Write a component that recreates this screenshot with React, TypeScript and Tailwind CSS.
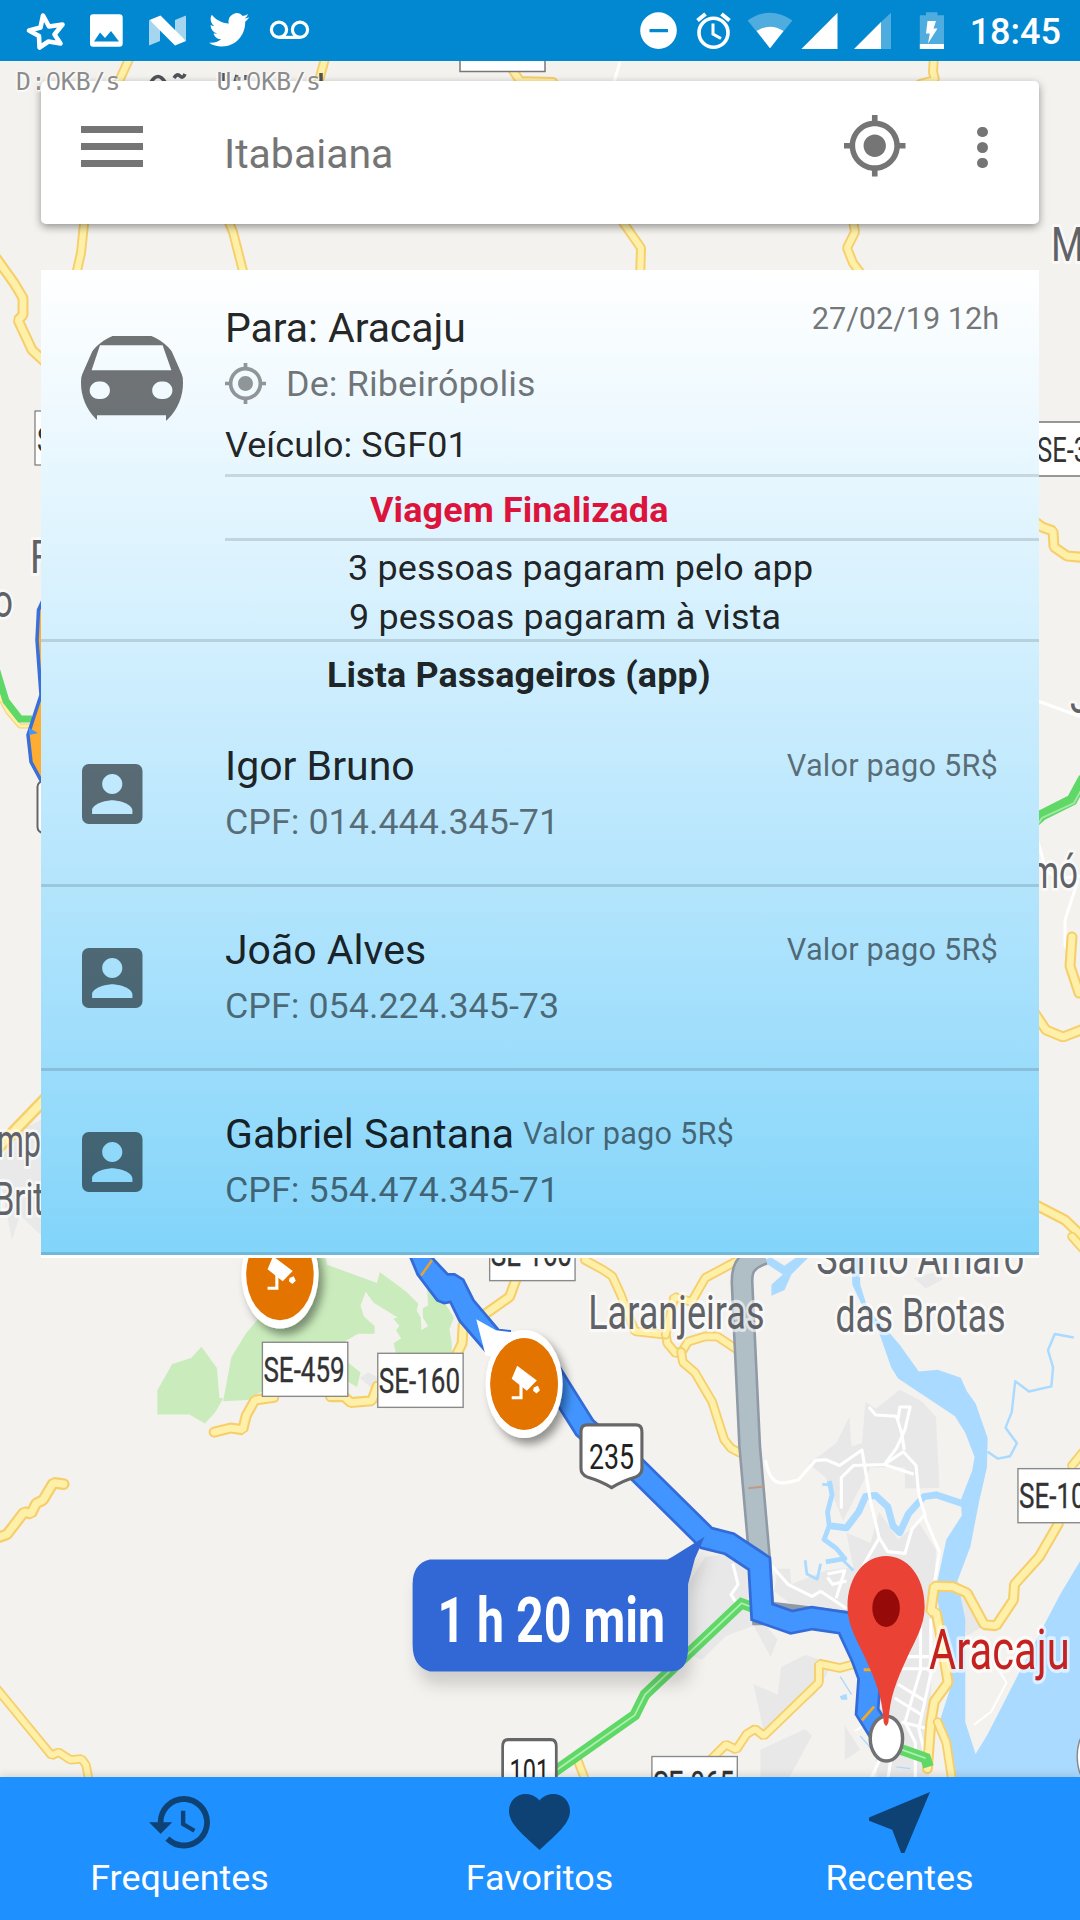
import React from "react";

const ROBOTO = "Roboto, sans-serif";

/* ---------- icons ---------- */

function TargetIcon({ className }: { className: string }) {
  return (
    <svg viewBox="1 1 22 22" className={className} fill="currentColor">
      <path d="M12 8c-2.21 0-4 1.79-4 4s1.79 4 4 4 4-1.79 4-4-1.79-4-4-4zm8.94 3A8.994 8.994 0 0013 3.06V1h-2v2.06A8.994 8.994 0 003.06 11H1v2h2.06A8.994 8.994 0 0011 20.94V23h2v-2.06A8.994 8.994 0 0020.94 13H23v-2h-2.06zM12 19c-3.87 0-7-3.13-7-7s3.13-7 7-7 7 3.13 7 7-3.13 7-7 7z" />
    </svg>
  );
}

function PersonIcon() {
  return (
    <svg viewBox="3 3 18 18" className="h-[60px] w-[60.5px]" fill="currentColor" preserveAspectRatio="none">
      <path d="M3 5v14a2 2 0 002 2h14a2 2 0 002-2V5a2 2 0 00-2-2H5a2 2 0 00-2 2zm12 4c0 1.66-1.34 3-3 3s-3-1.34-3-3 1.34-3 3-3 3 1.34 3 3zm-9 8c0-2 4-3.1 6-3.1s6 1.1 6 3.1v1H6v-1z" />
    </svg>
  );
}

function CarIcon() {
  return (
    <svg viewBox="0 0 102 102" className="h-[102px] w-[102px]">
      <defs>
        <clipPath id="avatar">
          <circle cx="51" cy="51" r="51" />
        </clipPath>
      </defs>
      <path
        clipPath="url(#avatar)"
        fillRule="evenodd"
        fill="currentColor"
        d="M18 4H84L102 45V90H85V83.3H16V90H0V45ZM19 13.3L10.6 38.3H90.4L81.6 13.3ZM18.8 49.6a8.8 8.8 0 100 17.4a8.8 8.8 0 100-17.4ZM81.3 49.6a8.8 8.8 0 100 17.4a8.8 8.8 0 100-17.4Z"
      />
    </svg>
  );
}

/* ---------- status bar ---------- */

function StatusBar() {
  return (
    <header className="relative h-[61px] w-full bg-[#0288d1]">
      <svg viewBox="0 0 1080 61" className="h-[61px] w-[1080px]" fill="#fff">
        <path
          d="M43 15.500L49 26.500L62.500 24.500L54.500 34.500L60.500 43.500L48.500 41.500L39.500 47.500L39 36L29 30.500L40.500 27.500Z"
          fill="none"
          stroke="#fff"
          strokeWidth="4.600"
          strokeLinejoin="round"
        />
        <path fillRule="evenodd" d="M93 14.300H119.500Q122.700 14.300 122.700 17.500V43.500Q122.700 46.700 119.500 46.700H93Q90 46.700 90 43.500V17.500Q90 14.300 93 14.300ZM94 41.500H119L111 31L105 38L100 32.500Z" />
        <path d="M149 20L160 28V41L149 45.500ZM175 20L186 15.500V41L175 33Z" opacity=".65" />
        <path d="M149.500 20L160.500 15.500L186 41L175 45.500Z" />
        <g transform="translate(209 9.500) scale(1.68 1.7)">
          <path d="M23.950 4.570a10 10 0 01-2.820.770 4.960 4.960 0 002.160-2.720c-.950.550-2 .950-3.120 1.180a4.920 4.920 0 00-8.380 4.480C7.690 8.090 4.070 6.130 1.640 3.160a4.820 4.820 0 00-.670 2.480c0 1.710.870 3.210 2.190 4.100a4.900 4.900 0 01-2.230-.620v.060a4.920 4.920 0 003.950 4.830 5 5 0 01-2.210.080 4.940 4.940 0 004.600 3.420A9.870 9.870 0 010 19.540a13.990 13.990 0 007.550 2.210c9.050 0 14-7.500 14-13.980 0-.210 0-.420-.020-.630a9.940 9.940 0 002.460-2.550z" />
        </g>
        <g fill="none" stroke="#fff" strokeWidth="3.200">
          <circle cx="279" cy="29.800" r="7.600" />
          <circle cx="300" cy="29.800" r="7.600" />
          <path d="M279 37.400H300" />
        </g>
        <path fillRule="evenodd" d="M658.500 12.300a18.300 18.300 0 100 36.600a18.300 18.300 0 100-36.600ZM649.500 29H668V32.200H649.500Z" />
        <g fill="none" stroke="#fff">
          <circle cx="713.500" cy="32.700" r="14.500" strokeWidth="3.600" />
          <path d="M713 23.500V34L721 38.500" strokeWidth="3" />
          <path d="M697.500 20.500L705.500 14M729.500 20.500L721.500 14" strokeWidth="4" />
        </g>
        <path d="M770 48.300L747.600 20.500Q770 5 792.400 20.500Z" opacity=".3" />
        <path d="M770 48.300L756.600 31Q770 22.500 783.500 31Z" />
        <path d="M801.400 49L837.500 12.700V49Z" />
        <path d="M881 22L891 12.700V49H881Z" opacity=".3" />
        <path d="M854 49L881 22V49Z" />
        <path d="M919.800 15.300H926V12.300H937.400V15.300H944V44H919.800Z" opacity=".3" />
        <path d="M919.800 44H944V49H919.800ZM927.500 21H936L933.500 28.500H937.500L928 43.500L929.800 33.500H926Z" />
      </svg>
      <span className="absolute top-0 right-[19px] text-[36px] leading-[65px] font-medium text-white">18:45</span>
    </header>
  );
}

/* ---------- map ---------- */

function Road({ d, w = 28 }: { d: string; w?: number }) {
  return (
    <g fill="none" strokeLinecap="round" strokeLinejoin="bevel">
      <path d={d} stroke="#f6cf6b" strokeWidth={w} />
      <path d={d} stroke="#fff0a9" strokeWidth={w * 0.62} />
    </g>
  );
}

function Plate({ x, y, label, h = 157 }: { x: number; y: number; label: string; h?: number }) {
  return (
    <g>
      <rect x={x} y={y} width="248" height={h} fill="#fff" stroke="#8a8a8a" strokeWidth="4" />
      <text x={x + 3} y={y + 115} fontSize="103" textLength="236" lengthAdjust="spacingAndGlyphs" fill="#333" stroke="#333" strokeWidth="1">
        {label}
      </text>
    </g>
  );
}

function Shield({ x, y, label, scaleX = 1 }: { x: number; y: number; label: string; scaleX?: number }) {
  return (
    <g transform={`translate(${x} ${y}) scale(${scaleX} 1)`}>
      <path d="M22 4H163Q181 4 181 24V130Q181 148 163 155Q120 168 93 186Q65 168 22 155Q4 148 4 130V24Q4 4 22 4Z" fill="#fff" stroke="#666" strokeWidth="9" />
      <text x="27" y="133" fontSize="104" textLength="131" lengthAdjust="spacingAndGlyphs" fill="#222">
        {label}
      </text>
    </g>
  );
}

function CameraPin({ x, y }: { x: number; y: number }) {
  return (
    <g transform={`translate(${x} ${y})`}>
      <ellipse rx="112" ry="157" fill="#fff" filter="url(#pinShadow)" />
      <ellipse rx="98" ry="133" fill="#e37400" />
      <path d="M-20 -53L37 -10L8 20L-36 -15ZM28 10L40 5L46 18L36 28L26 20Z" fill="#fff" />
      <path d="M-36 40H-9V0" fill="none" stroke="#fff" strokeWidth="9" />
    </g>
  );
}

function Place({ x, y, w, size = 140, color = "#5f6368", children }: { x: number; y: number; w: number; size?: number; color?: string; children: string }) {
  return (
    <text
      x={x}
      y={y}
      fontSize={size}
      textLength={w}
      lengthAdjust="spacingAndGlyphs"
      fill={color}
      stroke="#fff"
      strokeOpacity=".6"
      strokeWidth={size * 0.13}
      strokeLinejoin="round"
      paintOrder="stroke"
    >
      {children}
    </text>
  );
}

function MapCanvas() {
  return (
    <svg viewBox="0 0 1080 1920" className="absolute inset-0 h-[1920px] w-[1080px]" style={{ fontFamily: ROBOTO }}>
      <defs>
        <filter id="pinShadow" x="-30%" y="-30%" width="170%" height="170%">
          <feDropShadow dx="14" dy="18" stdDeviation="12" floodOpacity=".4" />
        </filter>
        <filter id="bubbleShadow" x="-20%" y="-20%" width="140%" height="160%">
          <feDropShadow dx="12" dy="40" stdDeviation="22" floodOpacity=".15" />
        </filter>
      </defs>
      <rect width="1080" height="1920" fill="#f3f2ee" />

      {/* upper and side margins */}
      <path d="M622 55L614 82" stroke="#fff" strokeWidth="3" />
      <Road w={10} d="M131 55L119 81L84 224L81 253L76 275" />
      <Road w={10} d="M326 55L318 84" />
      <Road w={10} d="M228 220L233 232L244 275" />
      <Road w={10} d="M510 66L520 81L553 82" />
      <Road w={10} d="M934 55L933 72L935 80L920 84" />
      <Road w={10} d="M620 218L641 248L640 280" />
      <Road w={10} d="M852 215L855 232L847 248L853 263L862 275" />
      <Road w={11} d="M-6 255L14 283L23 298L23 315L18 320L32 350L45 362" />
      <rect x="460" y="40" width="85" height="31.500" fill="#fff" stroke="#777" strokeWidth="1.500" />
      <g fill="none" stroke="#4f5357" strokeWidth="3.500">
        <path d="M151 82Q158 71 165 82M174 78Q177 73 180 76T185 74" />
        <path d="M223 73V82M237 75L235 82M246 75V80M321 73V82" />
      </g>
      <Place x={1051} y={260.700} w={33} size={48}>M</Place>
      <rect x="35" y="411" width="85" height="54" fill="#fff" stroke="#777" strokeWidth="1.200" />
      <text x="37" y="452" fontSize="35.500" textLength="81" lengthAdjust="spacingAndGlyphs" fill="#333">SE-106</text>
      <Place x={30} y={573} w={21} size={47}>F</Place>
      <Place x={-7} y={617} w={20} size={47}>o</Place>
      <Road w={5} d="M-4 690L8 712L20 726L32 726" />
      <path d="M-4 668L6 701L20 719L32 719" fill="none" stroke="#5fd868" strokeWidth="7" />
      <path d="M44 598L38.500 610L37 640L41 695L28 735L31 762L44 786Z" fill="#ffac33" stroke="#3a6fd8" strokeWidth="3.500" />
      <path d="M29 728L38 733L29 735Z" fill="#4295fe" />
      <rect x="37.500" y="781" width="40" height="52" rx="6" fill="#fff" stroke="#666" strokeWidth="2" />
      <path d="M0 1160L20 1130L41 1120V1235L20 1215L12 1240L0 1180Z" fill="#e9e9e9" />
      <Road w={13} d="M-6 1152L48 1096" />
      <Place x={-3} y={1156.500} w={44} size={47}>mp</Place>
      <Place x={-6} y={1214.600} w={50} size={47}>Brit</Place>
      <rect x="1000" y="422" width="100" height="54" fill="#fff" stroke="#777" strokeWidth="1.500" />
      <text x="1037" y="462" fontSize="35.500" textLength="80" lengthAdjust="spacingAndGlyphs" fill="#333">SE-339</text>
      <Road w={11} d="M1030 518L1042 527L1053 531L1054 547L1067 556L1090 558" />
      <path d="M1035 700L1090 720M1036 835L1046 870L1058 879L1080 876M1078 880L1065 920V945L1074 965" fill="none" stroke="#fff" strokeWidth="3" />
      <Place x={1070} y={713} w={20} size={47}>J</Place>
      <path d="M1034 822L1042 815L1072 800L1084 778" fill="none" stroke="#5fd868" strokeWidth="11" />
      <path d="M1034 830L1042 818L1074 803L1084 785" fill="none" stroke="#a5e9a7" strokeWidth="1.800" />
      <Place x={1030} y={888} w={48} size={46}>mó</Place>
      <Road w={11} d="M1072 937L1070 966L1079 993" />
      <Road w={11} d="M1034 1012L1046 1030L1063 1037L1086 1028" />
      <Road w={11} d="M1034 1204L1065 1220L1090 1244" />

      {/* south-west quadrant */}
      <g transform="translate(0 1240) scale(.34435)">
        <path
          fill="#caecbc"
          d="M457 436L500 360L555 343L585 310L630 372L637 458L648 460L640 475L625 500L595 533L550 507L457 507ZM648 468L672 340L715 270L745 235L900 30L945 50L950 72L1095 125L1103 93L1180 150L1215 185L1210 205L1222 225L1224 262L1243 250L1228 225L1228 198L1243 190L1240 130L1290 180L1318 225L1305 260L1312 300L1312 328L1150 328L1143 300L1165 285L1150 262L1160 250L1142 228L1155 225L1085 182L1062 150L1047 190L1057 222L1088 250L1088 272L1040 272L1003 293L1010 355L1047 385L1037 427L1008 410V440L760 440L720 465Z"
        />
        <path d="M1045 400L1070 385L1100 400V430L1080 432Z" fill="#e8e8e8" />
        <Road w={32} d="M622 558L670 546L705 551L715 510L740 465L795 457" />
        <Road w={32} d="M960 455L1000 455L1018 472L1080 467L1095 425" />
        <Road w={32} d="M1325 335L1342 300L1345 245L1395 225L1480 165L1500 110" />
        <Road w={34} d="M-30 872L20 855L70 790L90 795L105 765L125 755L155 705L185 709" />
        <Road w={27} d="M-20 1290L150 1497L170 1487L205 1510L237 1507L250 1525L262 1590" />
        <path
          d="M1170 0L1193 52L1213 100L1270 175L1290 183L1308 180L1335 235L1410 322L1480 330V265L1448 262L1375 175L1345 115L1320 100L1300 100L1255 52L1230 0Z"
          fill="#4295fe"
          stroke="#336bd9"
          strokeWidth="8"
        />
        <path d="M1223 103L1255 58" stroke="#f0a030" strokeWidth="7" />
        <Plate x={762} y={297} label="SE-459" />
        <Plate x={1097} y={329} label="SE-160" />
        <Plate x={1422} y={-39} label="SE-160" />
      </g>

      {/* south-east quadrant */}
      <g transform="translate(540 1240) scale(.34435)">
        <g fill="#e8e8e8">
          <path d="M780 650L860 590L898 515L905 600L935 590L945 470L975 490L1045 435L1110 470L1150 515L1160 720L1060 722L1060 660L960 660L880 815L845 730L830 690Z" />
          <path d="M890 850L960 880L985 790L1040 870L1100 820L1150 900L1140 1100L1130 1568L980 1568L960 1200L890 1080L760 1080L680 1020L690 955L725 955L730 1000L830 960L910 950Z" />
          <path d="M430 1000L480 920L560 910L610 960L615 1090L640 1100L690 1160L670 1210L620 1120L540 1150L470 1220L430 1200Z" />
          <path d="M620 1290L690 1320L700 1240L770 1205L850 1230L800 1320L650 1430Z" />
          <path d="M640 1480L770 1420L790 1440L720 1568L640 1568ZM885 1410L930 1480L885 1510Z" />
          <path d="M1210 1030L1250 1050L1290 1120L1240 1150ZM1085 110L1160 90L1170 115L1120 140Z" />
        </g>
        <g fill="#aadaff">
          <path d="M905 40L907 130L940 200L985 270L1020 370L1040 402L1120 455L1205 512L1235 560L1262 630L1255 670L1222 755L1225 800L1180 870L1165 940L1150 1010L1170 1150L1195 1290L1160 1400L1210 1600H1600V880L1510 1030L1400 1240L1300 1435L1265 1493L1235 1400L1235 1100L1212 990L1250 890L1275 760L1298 660L1300 575L1265 475L1240 440L1222 400L1155 377L1100 382L1045 305L990 240L955 210L930 130L928 40Z" />
          <path d="M645 60L705 100L672 130V162L710 145L730 100L780 50H745L710 75L670 50ZM870 1325L890 1318L893 1335H875Z" />
        </g>
        <g fill="none" stroke="#aadaff" strokeLinejoin="round">
          <path d="M1235 768L1150 740L1115 745L1070 795L1045 850L1025 830L1010 775L975 742L945 745L925 790L890 836L845 830" strokeWidth="20" />
          <path d="M840 700L848 740L835 790L840 830L825 870L860 895L885 925L830 935" strokeWidth="14" />
          <path d="M770 930L775 970L805 985L815 940M820 710L850 712M880 930L910 960" strokeWidth="8" />
          <path d="M1550 283L1495 273L1475 320L1490 370L1485 425L1420 440L1380 410L1370 500L1352 545L1385 590L1365 628L1330 635L1300 615" strokeWidth="7" />
          <path d="M872 1268L905 1320M930 1440L960 1475M1035 1530L1075 1535" strokeWidth="4" />
        </g>
        <g fill="none" stroke="#fff" strokeWidth="9" strokeLinejoin="round">
          <path d="M655 640C670 720 700 710 750 697L800 640L830 638L870 655L935 610L960 760L985 865L1010 905L1060 910L1080 840L1115 800L1160 905L1145 1000" />
          <path d="M875 780V690L910 655L1000 652L1055 615L1092 655L1100 740L1120 805" />
          <path d="M955 485L975 508L1035 512L1050 560L1058 610M1040 520L1045 485L1075 485L1060 550L1035 605L1000 652L1085 680" />
          <path d="M985 865L930 960M672 945L720 1000L790 1035L815 1020L890 1070M560 940L575 1000L555 1030L580 1070" />
          <path d="M835 970L885 960L860 1040M835 980L850 1000L890 990" />
          <path d="M1040 1210H1130M1040 1245H1130M1105 1100V1250L1060 1400L1090 1460V1568M1135 1100V1260L1100 1420L1120 1500M1040 1290L1120 1340M1030 1330L1110 1380M1050 1400L1130 1420M990 1500L960 1568M1020 1500L1010 1568" />
          <path d="M915 1425L960 1400M1260 1408L1310 1370L1355 1285L1320 1230" strokeWidth="6" />
        </g>

        <Road d="M130 58L180 85L210 105L235 160L275 265L365 275L370 300L395 330L415 320L430 295L480 280L515 280L575 320" />
        <Road d="M365 275L390 165L440 180L480 110L570 62" />
        <Road d="M410 325L415 355L450 385L500 470L535 580L555 605L600 628" />
        <Road d="M485 1520L540 1465L570 1480L600 1435L625 1420L650 1440L810 1285L810 1230L870 1243L935 1225" />
        <Road w={32} d="M1125 1535L1135 1400L1145 1340L1185 1285L1160 1130L1150 1080L1135 1080L1145 1005L1200 1007L1240 1025L1290 1117L1325 1120L1375 1045L1378 1000L1450 920L1505 825" />
        <Road d="M1155 1400L1180 1460L1200 1590" />
        <Road d="M1545 655L1590 600M1545 -10L1590 40" />
        <Road d="M105 1500L140 1590" />

        <g fill="none">
          <path d="M40 1545L275 1380L305 1320L585 1055L640 1075M1050 1480L1120 1505L1128 1530" stroke="#5fd868" strokeWidth="31" />
          <path d="M40 1545L275 1380L305 1320L585 1055L640 1075M1050 1480L1120 1505" stroke="#b0efb0" strokeWidth="5" />
          <path d="M650 40C590 60 585 90 587 130L609 600L637 920L648 1085L680 1085L890 1110" stroke="#8f9aa6" strokeWidth="67" />
          <path d="M650 40C590 60 585 90 587 130L609 600L637 920L648 1085" stroke="#b0bec5" strokeWidth="52" />
          <path d="M605 721L650 716" stroke="#c09a85" strokeWidth="6" />
          <path d="M20 370L130 545L170 580L270 655L483 865L550 882L637 940L645 1080L730 1110L790 1098L890 1113L935 1210L957 1270L950 1370L1000 1450" stroke="#336bd9" strokeWidth="71" />
          <path d="M20 370L130 545L170 580L270 655L483 865L550 882L637 940L645 1080L730 1110L790 1098L890 1113L935 1210L957 1270L950 1370L1000 1450" stroke="#4295fe" strokeWidth="55" />
          <path d="M935 1395L970 1355M940 1248H962" stroke="#f5a623" strokeWidth="8" />
        </g>

        <Shield x={115} y={533} label="235" />
        <Shield x={-112} y={1447} label="101" scaleX={0.88} />
        <Plate x={325} y={1500} label="SE-065" />
        <Plate x={1388} y={664} label="SE-100" />
        <ellipse cx="1640" cy="1500" rx="80" ry="110" fill="#fff" stroke="#888" strokeWidth="4" />

        <Place x={140} y={258} w={512}>Laranjeiras</Place>
        <Place x={802} y={100} w={604}>Santo Amaro</Place>
        <Place x={858} y={268} w={494}>das Brotas</Place>
        <Place x={1130} y={1245} w={408} size={162} color="#c5221f">Aracaju</Place>

        <g filter="url(#bubbleShadow)">
          <path d="M-320 928H370L385 920L478 862L450 925L430 1000V1185Q430 1253 380 1253H-320Q-370 1240 -370 1175V1000Q-370 940 -320 928Z" fill="#3367d6" />
        </g>
        <text x="-298" y="1166" fontSize="184" fontWeight="700" textLength="661" lengthAdjust="spacingAndGlyphs" fill="#fff">
          1 h 20 min
        </text>

        <ellipse cx="1006" cy="1448" rx="47" ry="65" fill="#fff" stroke="#707173" strokeWidth="10" />
        <path
          d="M1005 918C945 918 893 975 893 1065C893 1120 922 1165 945 1215C975 1280 995 1330 998 1400Q1005 1422 1012 1400C1015 1330 1035 1280 1065 1215C1088 1165 1117 1120 1117 1065C1117 975 1065 918 1005 918Z"
          fill="#ea4335"
        />
        <ellipse cx="1005" cy="1069" rx="40" ry="55" fill="#960a0a" />
      </g>

      <g transform="translate(0 1240) scale(.34435)">
        <CameraPin x={813} y={100} />
        <CameraPin x={1522} y={418} />
        <path d="M1383 230L1410 335L1440 340L1490 268L1440 262Z" fill="#fff" />
        <ellipse cx="1522" cy="418" rx="98" ry="133" fill="#e37400" />
        <path d="M1502 365L1559 408L1530 438L1486 403ZM1550 428L1562 423L1568 436L1558 446L1548 438Z" fill="#fff" />
        <path d="M1486 458H1513V418" fill="none" stroke="#fff" strokeWidth="9" />
      </g>
    </svg>
  );
}

/* ---------- cards ---------- */

function RateText({ letter }: { letter: string }) {
  return (
    <span>
      {letter}:<span className="font-[Open_Sans] text-[26px]">0</span>KB/s
    </span>
  );
}

function SearchBar() {
  return (
    <div className="mx-[41px] mt-5 flex h-[143px] items-start rounded-[5px] bg-white text-[#757575] shadow-[0_3px_8px_rgba(0,0,0,0.4)]">
      <div className="mt-[45px] ml-10 flex w-[61.500px] flex-col gap-[10px]">
        <div className="h-[7px] bg-current" />
        <div className="h-[7px] bg-current" />
        <div className="h-[7px] bg-current" />
      </div>
      <span className="mt-[49px] ml-[81.500px] text-[41px] leading-[49px]">Itabaiana</span>
      <TargetIcon className="mt-[34px] ml-auto h-[61.500px] w-[61.500px]" />
      <div className="mt-[46px] mr-[51.500px] ml-[71.500px] flex flex-col gap-[5px]">
        <div className="h-[10.400px] w-[10.400px] rounded-full bg-current" />
        <div className="h-[10.400px] w-[10.400px] rounded-full bg-current" />
        <div className="h-[10.400px] w-[10.400px] rounded-full bg-current" />
      </div>
    </div>
  );
}

type Passenger = { name: string; cpf: string; inline?: boolean };

const passengers: Passenger[] = [
  { name: "Igor Bruno", cpf: "014.444.345-71" },
  { name: "João Alves", cpf: "054.224.345-73" },
  { name: "Gabriel Santana", cpf: "554.474.345-71", inline: true },
];

function PassengerRow({ name, cpf, inline }: Passenger) {
  return (
    <div className="flex h-[184px] border-b-[3px] border-black/[0.13] pr-[41px] pl-[41px]">
      <div className="mt-[61px] w-[143px] shrink-0 text-black/[0.54]">
        <PersonIcon />
      </div>
      <div className="mt-[39px] flex-1">
        <div className={inline ? "flex gap-[9px]" : "flex justify-between"}>
          <span className="text-[41px] leading-[49px] text-black/[0.87]">{name}</span>
          <span className="text-[30.750px] leading-[47px] tracking-[0.180px] text-black/[0.54]">Valor pago 5R$</span>
        </div>
        <div className="mt-[5px] text-[35.900px] leading-[53px] text-black/[0.54]">CPF: {cpf}</div>
      </div>
    </div>
  );
}

function TripCard() {
  return (
    <section className="mx-[41px] mt-[46px] h-[988px] border-b-[3px] border-white bg-linear-to-b from-white to-[#81d4fa] bg-clip-padding text-[35.900px] text-black/[0.87]">
      <div className="flex h-[372px] border-b-[3px] border-black/[0.13]">
        <div className="w-[184px] shrink-0 pt-[62px] pl-10 text-black/[0.54]">
          <CarIcon />
        </div>
        <div className="flex flex-1 flex-col">
          <div className="h-[207px] border-b-[3px] border-black/[0.13] pt-[33px]">
            <div className="flex justify-between pr-10">
              <span className="text-[41px] leading-[50px] tracking-[-0.080px]">Para: Aracaju</span>
              <span className="text-[30.750px] leading-[31px] tracking-[-0.080px] text-black/[0.54]">27/02/19 12h</span>
            </div>
            <div className="flex h-[63px] items-center text-black/[0.54]">
              <TargetIcon className="-mt-[3px] mr-[20px] h-[41px] w-[41px] opacity-75" />
              <span className="tracking-[0.120px]">De: Ribeirópolis</span>
            </div>
            <div className="leading-[58px] tracking-[0.100px]">Veículo: SGF01</div>
          </div>
          <div className="h-[64px] border-b-[3px] border-black/[0.13] pt-[5px] pl-[145px] leading-[57px] font-bold tracking-[0.120px] text-[#dc143c]">
            Viagem Finalizada
          </div>
          <div className="pt-[3px] pl-[123px] leading-[49px] tracking-[0.180px]">
            <div>3 pessoas pagaram pelo app</div>
            <div className="pl-[1px]">9 pessoas pagaram à vista</div>
          </div>
        </div>
      </div>
      <div className="h-[61px] pt-[5px] pl-[286px] leading-[57px] font-bold tracking-[0.150px]">Lista Passageiros (app)</div>
      {passengers.map((p) => (
        <PassengerRow key={p.cpf} {...p} />
      ))}
    </section>
  );
}

/* ---------- bottom navigation ---------- */

const tabs = [
  {
    label: "Frequentes",
    box: "1 3 21 18",
    size: "mt-[19px] h-[52.500px] w-[61px]",
    d: "M13 3a9 9 0 00-9 9H1l3.890 3.890.070.140L9 12H6c0-3.870 3.130-7 7-7s7 3.130 7 7-3.130 7-7 7c-1.930 0-3.680-.790-4.940-2.060l-1.420 1.420A8.954 8.954 0 0013 21a9 9 0 000-18zm-1 5v5l4.280 2.540.720-1.210-3.500-2.080V8H12z",
  },
  {
    label: "Favoritos",
    box: "2 3 20 18.350",
    size: "mt-[17px] h-[56px] w-[61px]",
    d: "M12 21.350l-1.450-1.320C5.400 15.360 2 12.280 2 8.500 2 5.420 4.420 3 7.500 3c1.740 0 3.410.810 4.500 2.090C13.090 3.810 14.760 3 16.500 3 19.580 3 22 5.420 22 8.500c0 3.780-3.400 6.860-8.550 11.540L12 21.350z",
  },
  {
    label: "Recentes",
    box: "3 3 18 18",
    size: "mt-[15px] h-[61px] w-[61px]",
    d: "M21 3L3 10.530v.980l6.840 2.650L12.480 21h.980L21 3z",
  },
];

function BottomNav() {
  return (
    <nav className="mt-auto grid h-[143px] grid-cols-3 bg-[#1e90ff] shadow-[0_-2px_8px_rgba(0,0,0,0.12)]">
      {tabs.map((t) => (
        <div key={t.label} className="flex flex-col items-center">
          <div className="h-[79px] pr-[2px]">
            <svg viewBox={t.box} className={t.size} fill="#0f4274">
              <path d={t.d} />
            </svg>
          </div>
          <span className="pr-[1px] text-[35.900px] leading-[44px] text-white">{t.label}</span>
        </div>
      ))}
    </nav>
  );
}

export default function App() {
  return (
    <div className="relative h-[1920px] w-[1080px] overflow-hidden font-[Roboto]">
      <MapCanvas />
      <div className="relative flex h-full flex-col">
        <StatusBar />
        <SearchBar />
        <TripCard />
        <BottomNav />
      </div>
      <div className="absolute top-[65px] left-4 flex gap-[96px] font-[DejaVu_Sans_Mono] text-[24.800px] leading-[30px] text-[#8c8c8c] [text-shadow:1px_1px_1px_#fff,-1px_0_2px_#fff,0_1px_3px_#fff]">
        <RateText letter="D" />
        <RateText letter="U" />
      </div>
    </div>
  );
}
